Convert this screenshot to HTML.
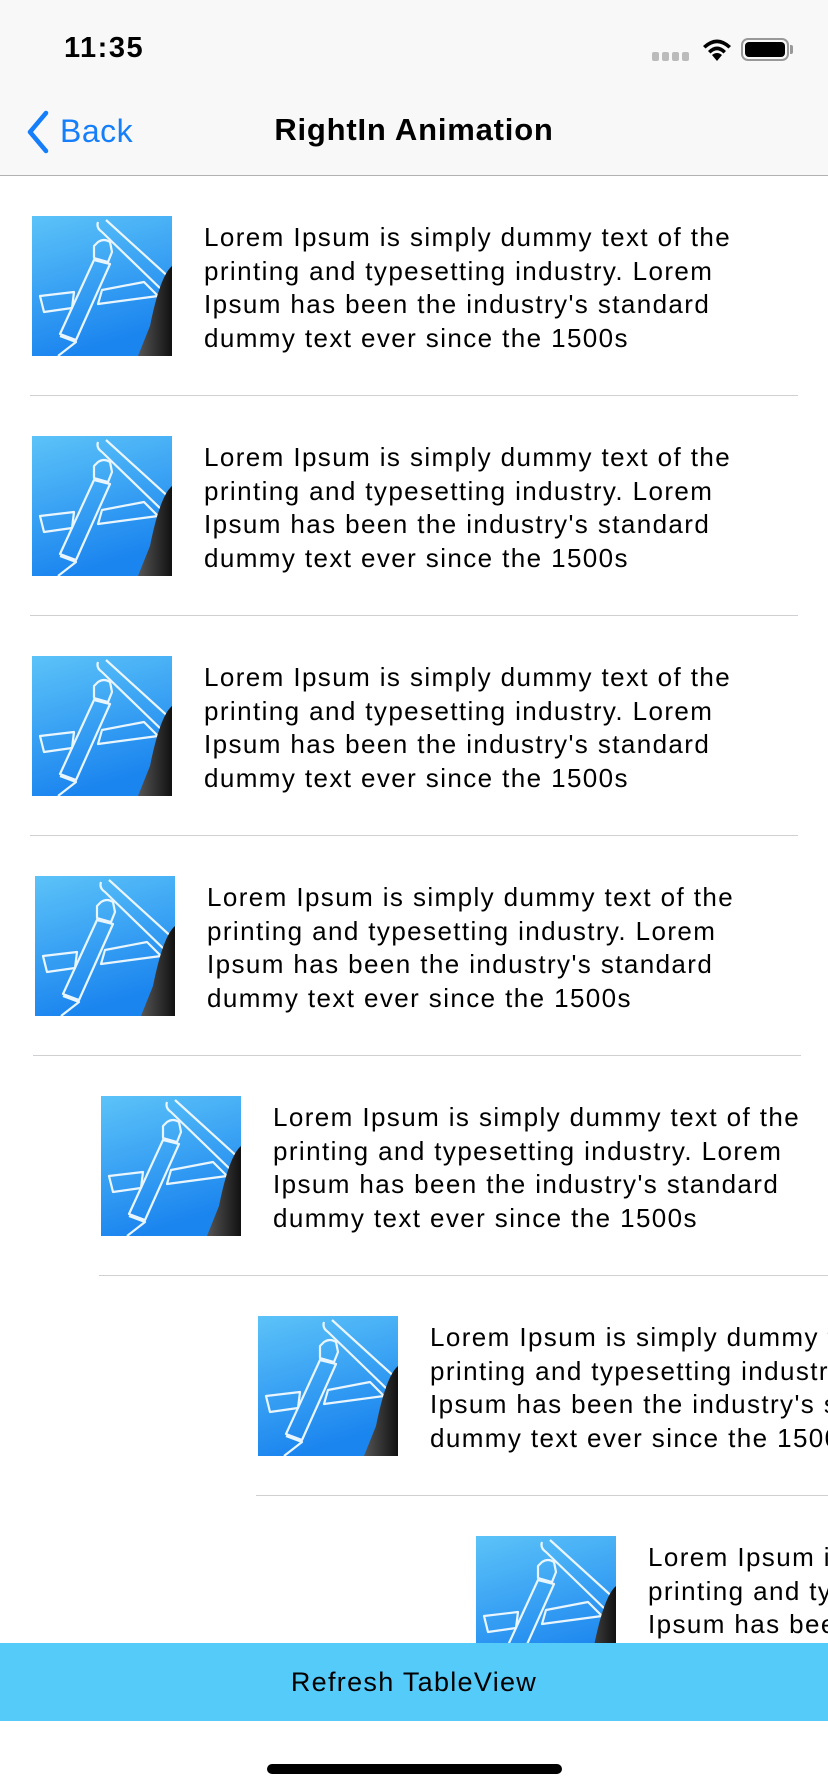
<!DOCTYPE html>
<html><head><meta charset="utf-8"><style>
*{margin:0;padding:0;box-sizing:border-box}
body{width:828px;height:1792px;position:relative;overflow:hidden;background:#fff;font-family:"Liberation Sans",sans-serif;color:#000}
.status{position:absolute;left:0;top:0;width:828px;height:176px;background:#f8f8f8;border-bottom:1.5px solid #b2b2b2}
.time{position:absolute;left:64px;top:32px;font-size:29px;font-weight:bold;letter-spacing:1.5px}
.title{position:absolute;left:0;width:828px;top:112px;text-align:center;font-size:31px;font-weight:bold;letter-spacing:0.8px}
.back{position:absolute;left:60px;top:113px;font-size:32px;color:#157efb;letter-spacing:0.5px}
.row{position:absolute;right:0;height:220px;overflow:hidden}
.row svg{position:absolute;left:32px;top:40px}
.row .t{position:absolute;left:204px;top:45px;font-size:26px;line-height:33.5px;white-space:nowrap;letter-spacing:1.4px}
.row .sep{position:absolute;left:30px;top:219px;width:768px;height:1.5px;background:#d0d0d4}
.btn{position:absolute;left:0;top:1643px;width:828px;height:78px;background:#55cbf9;text-align:center;line-height:78px;font-size:27px;letter-spacing:1.3px}
.home{position:absolute;left:267px;top:1764px;width:295px;height:10px;border-radius:5px;background:#000}
</style></head><body>
<svg width="0" height="0" style="position:absolute"><defs>
<linearGradient id="g" x1="0" y1="0" x2="0.3" y2="1"><stop offset="0" stop-color="#5cc3f8"/><stop offset="1" stop-color="#1a84ef"/></linearGradient>
<linearGradient id="d" x1="0" y1="0" x2="1" y2="0"><stop offset="0" stop-color="#555"/><stop offset="1" stop-color="#111"/></linearGradient>
<symbol id="ic" viewBox="0 0 140 140">
<rect width="140" height="140" fill="url(#g)"/>
<g fill="none" stroke="#eaf6ff" stroke-width="2.2" stroke-linejoin="round">
<path d="M74 4 L140 64 M66 6 Q64 12 70 16 L132 76"/>
<path d="M8 80 L42 76 L40 92 L12 96 Z"/>
<path d="M70 74 L112 66 L126 80 L66 88 Z"/>
<path d="M66 26 Q72 22 78 26 L80 36 L76 46 L62 42 L62 30 Z"/>
<path d="M62 44 L78 48 L44 124 L28 118 Z"/>
<path d="M28 120 L44 126 L26 140"/>
</g>
<path d="M140 50 Q128 60 118 110 L106 140 L140 140 Z" fill="url(#d)"/>
</symbol></defs></svg>

<div class="status">
<div class="time">11:35</div>
<svg style="position:absolute;left:652px;top:52px" width="38" height="10"><g fill="#bbb"><rect x="0" y="0" width="7" height="9" rx="2"/><rect x="10" y="0" width="7" height="9" rx="2"/><rect x="20" y="0" width="7" height="9" rx="2"/><rect x="30" y="0" width="7" height="9" rx="2"/></g></svg>
<svg style="position:absolute;left:700px;top:36px" width="34" height="26" viewBox="0 0 34 26"><path d="M17 25 L12 19 Q17 15 22 19 Z M8 15 Q17 6 26 15 L23.5 17.5 Q17 11 10.5 17.5 Z M3 10 Q17 -3 31 10 L28.5 12.5 Q17 2 5.5 12.5 Z" fill="#000"/></svg>
<div style="position:absolute;left:741px;top:38px;width:48px;height:23px;border:2px solid #999;border-radius:7px;padding:2px"><div style="width:100%;height:100%;background:#000;border-radius:4px"></div></div>
<div style="position:absolute;left:790px;top:45px;width:3px;height:9px;background:#999;border-radius:0 2px 2px 0"></div>
<svg style="position:absolute;left:25px;top:110px" width="26" height="44" viewBox="0 0 26 44"><path d="M21 3 L5 22 L21 41" fill="none" stroke="#157efb" stroke-width="4.5" stroke-linecap="round" stroke-linejoin="round"/></svg>
<div class="back">Back</div>
<div class="title">RightIn Animation</div>
</div>

<div class="row" style="top:176px;left:0"><svg width="140" height="140"><use href="#ic"/></svg><div class="t">Lorem Ipsum is simply dummy text of the<br>printing and typesetting industry. Lorem<br>Ipsum has been the industry's standard<br>dummy text ever since the 1500s</div><div class="sep"></div></div>
<div class="row" style="top:396px;left:0"><svg width="140" height="140"><use href="#ic"/></svg><div class="t">Lorem Ipsum is simply dummy text of the<br>printing and typesetting industry. Lorem<br>Ipsum has been the industry's standard<br>dummy text ever since the 1500s</div><div class="sep"></div></div>
<div class="row" style="top:616px;left:0"><svg width="140" height="140"><use href="#ic"/></svg><div class="t">Lorem Ipsum is simply dummy text of the<br>printing and typesetting industry. Lorem<br>Ipsum has been the industry's standard<br>dummy text ever since the 1500s</div><div class="sep"></div></div>
<div class="row" style="top:836px;left:3px"><svg width="140" height="140"><use href="#ic"/></svg><div class="t">Lorem Ipsum is simply dummy text of the<br>printing and typesetting industry. Lorem<br>Ipsum has been the industry's standard<br>dummy text ever since the 1500s</div><div class="sep"></div></div>
<div class="row" style="top:1056px;left:69px"><svg width="140" height="140"><use href="#ic"/></svg><div class="t">Lorem Ipsum is simply dummy text of the<br>printing and typesetting industry. Lorem<br>Ipsum has been the industry's standard<br>dummy text ever since the 1500s</div><div class="sep"></div></div>
<div class="row" style="top:1276px;left:226px"><svg width="140" height="140"><use href="#ic"/></svg><div class="t">Lorem Ipsum is simply dummy text of the<br>printing and typesetting industry. Lorem<br>Ipsum has been the industry's standard<br>dummy text ever since the 1500s</div><div class="sep"></div></div>
<div class="row" style="top:1496px;left:444px"><svg width="140" height="140"><use href="#ic"/></svg><div class="t">Lorem Ipsum is simply dummy text of the<br>printing and typesetting industry. Lorem<br>Ipsum has been the industry's standard<br>dummy text ever since the 1500s</div><div class="sep"></div></div>

<div class="btn">Refresh TableView</div>
<div class="home"></div>
</body></html>
